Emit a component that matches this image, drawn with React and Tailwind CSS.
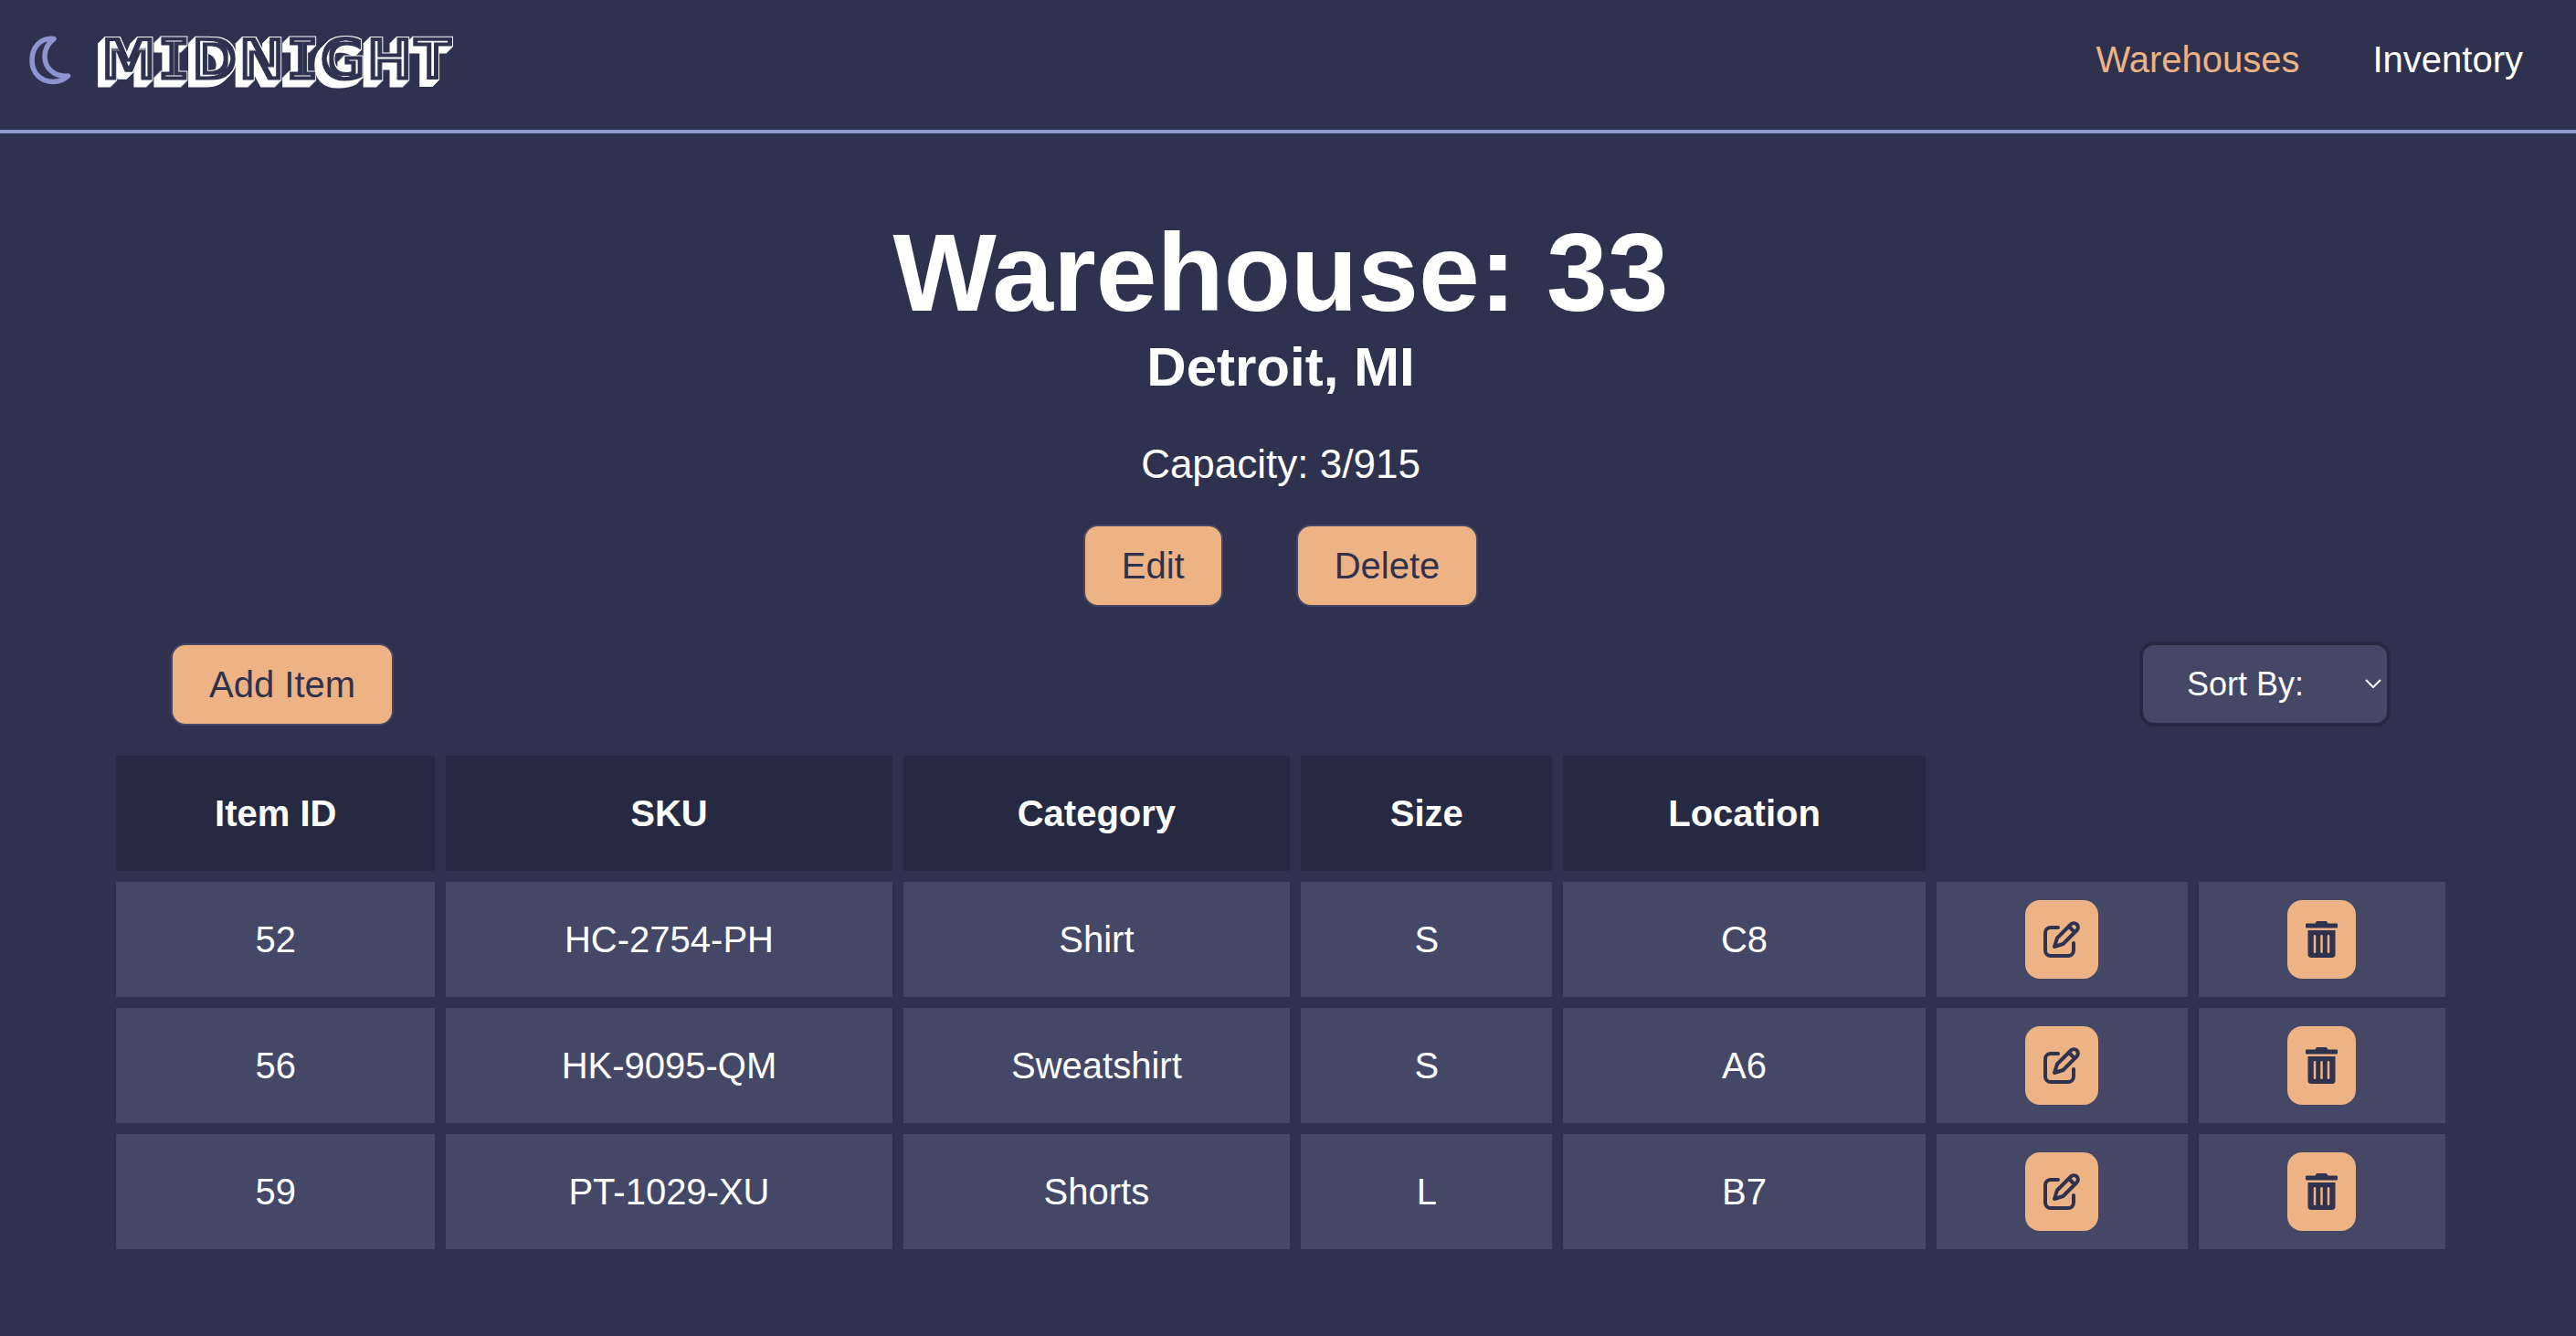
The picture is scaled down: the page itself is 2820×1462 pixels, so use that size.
import { FaTrashAlt } from "react-icons/fa";

const columns = ["Item ID", "SKU", "Category", "Size", "Location"];

const items = [
  { id: "52", sku: "HC-2754-PH", category: "Shirt", size: "S", location: "C8" },
  { id: "56", sku: "HK-9095-QM", category: "Sweatshirt", size: "S", location: "A6" },
  { id: "59", sku: "PT-1029-XU", category: "Shorts", size: "L", location: "B7" },
];

function MoonIcon() {
  return (
    <svg viewBox="0 0 46 54" className="h-[54px] w-[46px]" fill="none" stroke="#8d95d0" strokeWidth="5.5" strokeLinecap="round" strokeLinejoin="round" aria-hidden="true">
      <path d="M27 3.500C12 2 3 13 3 27C3 41 13 50.500 26 50.500C33 50.500 38.500 48 42.500 44C28 45.500 17 36 17 23C17 14 21.500 7.500 27 3.500Z" />
    </svg>
  );
}

/* Outlined, inlined and extruded lettering for the wordmark. */
function LogoFilter() {
  return (
    <svg className="absolute h-0 w-0" aria-hidden="true">
      <filter id="logo-shade" x="-5%" y="-10%" width="110%" height="130%" colorInterpolationFilters="sRGB">
        <feMorphology in="SourceAlpha" operator="dilate" radius="1" result="outer" />
        <feOffset in="outer" dx="-1" dy="1" result="o1" />
        <feMerge result="m1"><feMergeNode in="outer" /><feMergeNode in="o1" /></feMerge>
        <feOffset in="m1" dx="-2" dy="2" result="o2" />
        <feMerge result="m2"><feMergeNode in="m1" /><feMergeNode in="o2" /></feMerge>
        <feOffset in="m2" dx="-4" dy="4" result="o3" />
        <feMerge result="m3"><feMergeNode in="m2" /><feMergeNode in="o3" /></feMerge>
        <feFlood floodColor="#ffffff" />
        <feComposite in2="m3" operator="in" result="shade" />
        <feMorphology in="SourceAlpha" operator="erode" radius="5 4" result="core" />
        <feFlood floodColor="#ffffff" />
        <feComposite in2="core" operator="in" result="inline" />
        <feMerge>
          <feMergeNode in="shade" />
          <feMergeNode in="SourceGraphic" />
          <feMergeNode in="inline" />
        </feMerge>
      </filter>
    </svg>
  );
}

function Logo() {
  return (
    <a href="#home" className="flex items-center gap-8">
      <MoonIcon />
      <LogoFilter />
      <span className="font-['DejaVu_Sans'] text-[62px] leading-[60px] font-bold text-[#2f324f] [-webkit-text-stroke:1px_#2f324f] [filter:url(#logo-shade)]">
        M<span className="font-['DejaVu_Sans_Mono']">I</span>DN<span className="font-['DejaVu_Sans_Mono']">I</span>GHT
      </span>
    </a>
  );
}

function EditIcon() {
  return (
    <svg viewBox="0 0 40 40" className="h-10 w-10" fill="none" stroke="currentColor" strokeWidth="4" strokeLinecap="round" strokeLinejoin="round" aria-hidden="true">
      <path d="M16 7H8a6 6 0 0 0-6 6v19a6 6 0 0 0 6 6h19a6 6 0 0 0 6-6V24" />
      <path d="M12 28l3-9.500L30 3.500a4.500 4.500 0 0 1 6.500 6.500L21.500 25zM28 6l6 6" />
    </svg>
  );
}

function Button({ children }) {
  return (
    <button type="button" className="h-[90px] rounded-2xl border-2 border-[#444766] bg-[#eeb384] px-10 text-[40px] text-[#2f324f]">
      {children}
    </button>
  );
}

function IconButton({ label, children }) {
  return (
    <button type="button" aria-label={label} className="inline-flex h-[86px] items-center rounded-2xl bg-[#eeb384] px-5 align-middle text-[#2f324f]">
      {children}
    </button>
  );
}

export default function App() {
  return (
    <div className="min-h-screen bg-[#2f324f] font-['Liberation_Sans',sans-serif] text-[40px] leading-[46px] text-white">
      <header className="flex h-[146px] items-start justify-between border-b-4 border-[#8d95d0] pt-9 pr-[58px] pl-8">
        <Logo />
        <nav className="flex gap-20 pt-1.5">
          <a href="#warehouses" className="text-[#eeb384]">Warehouses</a>
          <a href="#inventory">Inventory</a>
        </nav>
      </header>

      <main className="pr-[131px] pl-[115px]">
        <section className="flex flex-col items-center pt-[84px]">
          <h1 className="text-[120px] leading-[136px] font-bold">Warehouse: 33</h1>
          <h2 className="text-[60px] leading-[72px] font-bold">Detroit, MI</h2>
          <p className="mt-11 text-[44px] leading-[52px]">Capacity: 3/915</p>
          <div className="mt-10 flex gap-20">
            <Button>Edit</Button>
            <Button>Delete</Button>
          </div>
        </section>

        <div className="mt-[38px] flex items-center justify-between px-[72px]">
          <Button>Add Item</Button>
          <div className="relative">
            <select aria-label="Sort By" className="block h-[93px] w-[275px] appearance-none rounded-2xl border-4 border-[#262942] bg-[#444766] pl-12 text-[36px]">
              <option>Sort By:</option>
              <option>Item ID</option>
              <option>SKU</option>
              <option>Category</option>
            </select>
            <svg viewBox="0 0 18 10" className="pointer-events-none absolute top-[41px] right-[10px] h-[10px] w-[18px]" fill="none" stroke="currentColor" strokeWidth="2" aria-hidden="true">
              <path d="M1 1l8 8 8-8" />
            </svg>
          </div>
        </div>

        <table className="mt-5 w-full table-fixed border-separate border-spacing-3 text-center">
          <colgroup>
            <col className="w-[14.100%]" />
            <col className="w-[19.700%]" />
            <col className="w-[17.100%]" />
            <col className="w-[11.100%]" />
            <col className="w-[16%]" />
            <col className="w-[11.100%]" />
            <col />
          </colgroup>
          <thead>
            <tr>
              {columns.map((name) => (
                <th key={name} scope="col" className="h-[126px] bg-[#262942] font-bold">{name}</th>
              ))}
            </tr>
          </thead>
          <tbody>
            {items.map((item) => (
              <tr key={item.id} className="[&>td]:h-[126px] [&>td]:bg-[#444766] [&>td]:p-0">
                <td>{item.id}</td>
                <td>{item.sku}</td>
                <td>{item.category}</td>
                <td>{item.size}</td>
                <td>{item.location}</td>
                <td><IconButton label="Edit item"><EditIcon /></IconButton></td>
                <td><IconButton label="Delete item"><FaTrashAlt className="h-10 w-[35px]" /></IconButton></td>
              </tr>
            ))}
          </tbody>
        </table>
      </main>
    </div>
  );
}
